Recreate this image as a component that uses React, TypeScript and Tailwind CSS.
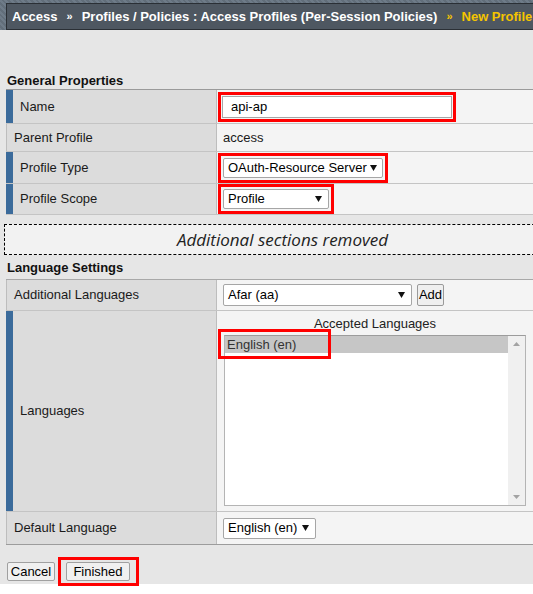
import React from 'react'

const sans = "font-['Liberation_Sans',Arial,sans-serif]"

function Caret() {
  return (
    <svg width="7" height="6" viewBox="0 0 7 6" className="shrink-0 ml-[3px]">
      <path d="M0 0h7L3.5 6z" fill="#111" />
    </svg>
  )
}

function Select({ value, className }: { value: string; className: string }) {
  return (
    <div
      className={`flex items-center justify-between whitespace-nowrap bg-white border border-[#a6a6a6] rounded-[2px] pl-[4px] pr-[6px] text-[13px] text-black ${className}`}
    >
      <span>{value}</span>
      <Caret />
    </div>
  )
}

function Row({
  label, bar, h, children, last,
}: {
  label: string; bar?: boolean; h: string; children?: React.ReactNode; last?: boolean
}) {
  return (
    <div className={`flex ${h} ${last ? 'border-b border-[#9c9c9c]' : 'border-b border-[#c4c4c4]'}`}>
      <div
        className={`w-[211px] shrink-0 flex items-center bg-[#dcdcdc] border-r border-[#bdbdbd] text-[13px] text-[#1a1a1a] ${
          bar ? 'border-l-[7px] border-l-[#3b6b9b] pl-[7px]' : 'border-l border-l-[#bdbdbd] pl-[7px]'
        }`}
      >
        {label}
      </div>
      <div className="flex-1 flex items-center bg-[#f4f4f4]">{children}</div>
    </div>
  )
}

export default function App() {
  return (
    <div className={`w-[533px] h-[594px] overflow-hidden bg-white ${sans}`}>
      {/* header strip */}
      <div className="pt-[3px] pl-[6px] bg-[repeating-linear-gradient(45deg,#6e7b88_0px,#6e7b88_2px,#626e7a_2px,#626e7a_4px)]">
        <div className="h-[27px] flex items-center whitespace-nowrap overflow-hidden bg-[#4e5761] border border-[#2a2f35] border-r-0 pl-[5px] text-[13px] font-bold text-white">
          <span>Access</span>
          <span className="mx-[9px] text-[11px]">»</span>
          <span>Profiles / Policies : Access Profiles (Per-Session Policies)</span>
          <span className="mx-[9px] text-[11px] text-[#f5c400]">»</span>
          <span className="text-[#f5c400]">New Profile</span>
        </div>
      </div>

      <div className="h-[554px] bg-[#e6e6e6]">
        <div className="pt-[43px] pl-[7px] h-[59px] text-[13px] leading-[16px] font-bold text-[#111]">General Properties</div>

        <div className="ml-[6px] border-t border-[#9a9a9a]">
          <Row label="Name" bar h="h-[34px]">
            <div className="ml-[1px] border-[3px] border-[#ff0000] p-[1px]">
              <div className="w-[230px] h-[22px] bg-white border border-[#a6a6a6] pl-[8px] flex items-center text-[13px] text-black">
                api-ap
              </div>
            </div>
          </Row>
          <Row label="Parent Profile" h="h-[28px]">
            <span className="pl-[6px] text-[13px] text-[#1a1a1a]">access</span>
          </Row>
          <Row label="Profile Type" bar h="h-[32px]">
            <div className="ml-[1px] border-[3px] border-[#ff0000] p-[2px]">
              <Select value="OAuth-Resource Server" className="w-[160px] h-[20px]" />
            </div>
          </Row>
          <Row label="Profile Scope" bar h="h-[31px]">
            <div className="ml-[1px] border-[3px] border-[#ff0000] p-[2px]">
              <Select value="Profile" className="w-[106px] h-[20px]" />
            </div>
          </Row>
        </div>

        <div className="mt-[9px] ml-[4px] w-[556px] h-[31px] flex items-center justify-center bg-[#f2f2f2] border border-dashed border-black border-r-0 font-['Open_Sans',sans-serif] italic text-[17px] text-[#222]">
          Additional sections removed
        </div>

        <div className="mt-[5px] pl-[7px] h-[16px] text-[13px] leading-[16px] font-bold text-[#111]">Language Settings</div>

        <div className="mt-[3px] ml-[6px] border-t border-[#a8a8a8]">
          <Row label="Additional Languages" h="h-[31px]">
            <Select value="Afar (aa)" className="ml-[6px] w-[189px] h-[22px]" />
            <div className="ml-[5px] w-[27px] h-[22px] flex items-center justify-center bg-[#efefef] border border-[#9a9a9a] rounded-[2px] text-[13px] text-black">
              Add
            </div>
          </Row>
          <Row label="Languages" bar h="h-[201px]">
            <div className="self-stretch flex-1 flex flex-col px-[7px] pt-[5px] pb-[5px]">
              <div className="text-center text-[13px] leading-[16px] text-[#222]">Accepted Languages</div>
              <div className="relative mt-[3px] flex-1 flex bg-white border border-[#b4b4b4] border-t-[#9c9c9c]">
                <div className="flex-1">
                  <div className="h-[17px] bg-[#c6c6c6] pl-[2px] text-[13px] leading-[17px] text-[#333]">English (en)</div>
                </div>
                <div className="w-[17px] bg-[#f0f0f0] flex flex-col justify-between items-center pt-[6px] pb-[6px]">
                  <svg width="7" height="4" viewBox="0 0 7 4">
                    <path d="M3.5 0L7 4H0z" fill="#a3a3a3" />
                  </svg>
                  <svg width="7" height="4" viewBox="0 0 7 4">
                    <path d="M0 0h7L3.5 4z" fill="#a3a3a3" />
                  </svg>
                </div>
                <div className="absolute left-[-7px] top-[-7px] w-[113px] h-[30px] border-[3px] border-[#ff0000]" />
              </div>
            </div>
          </Row>
          <Row label="Default Language" h="h-[33px]" last>
            <Select value="English (en)" className="ml-[6px] w-[93px] h-[21px]" />
          </Row>
        </div>

        <div className="mt-[12px] flex items-center">
          <div className="ml-[7px] w-[48px] h-[19px] flex items-center justify-center bg-[#f0f0f0] border border-[#a0a0a0] rounded-[2px] text-[13px] text-black">
            Cancel
          </div>
          <div className="ml-[3px] h-[29px] flex items-center border-[3px] border-[#ff0000] pl-[5px] pr-[6px]">
            <div className="w-[64px] h-[19px] flex items-center justify-center bg-[#f0f0f0] border border-[#a0a0a0] rounded-[2px] text-[13px] text-black">
              Finished
            </div>
          </div>
        </div>
      </div>
    </div>
  )
}
